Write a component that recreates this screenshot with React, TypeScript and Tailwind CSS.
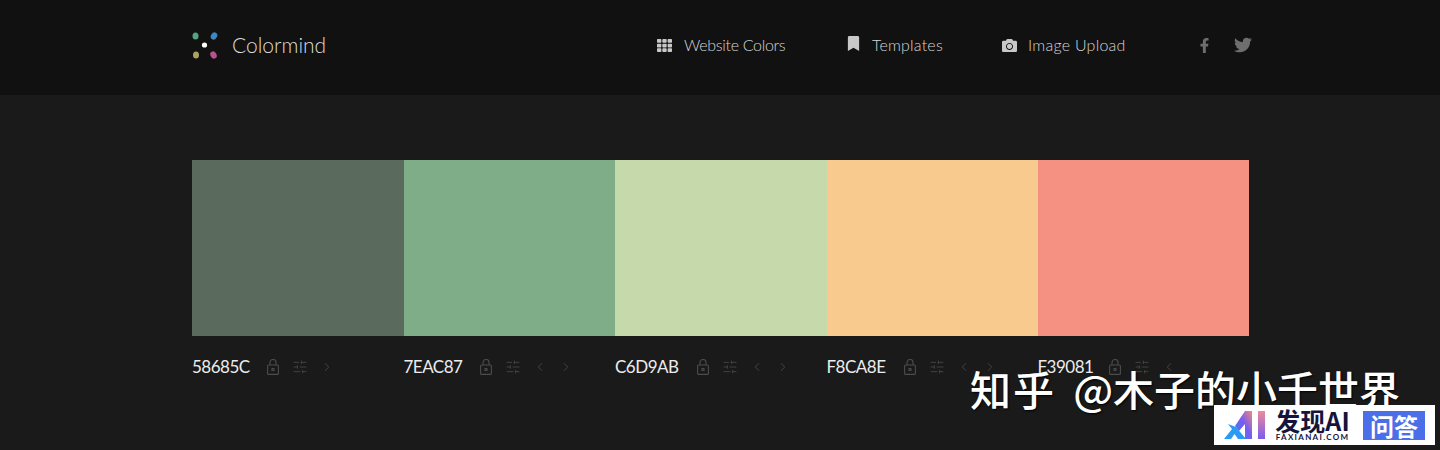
import React from "react";
import { FaTh, FaBookmark, FaCamera, FaFacebookF, FaTwitter } from "react-icons/fa";
import { SlidersHorizontal, ChevronLeft, ChevronRight } from "lucide-react";

const swatches = [
  { hex: "58685C", bg: "bg-[#5a6a5d]", w: "w-[59px]", left: false, right: true },
  { hex: "7EAC87", bg: "bg-[#7fad88]", w: "w-[60px]", left: true, right: true },
  { hex: "C6D9AB", bg: "bg-[#c6d9ab]", w: "w-[66px]", left: true, right: true },
  { hex: "F8CA8E", bg: "bg-[#f8ca8e]", w: "w-[61px]", left: true, right: true },
  { hex: "F39081", bg: "bg-[#f59182]", w: "w-[55px]", left: true, right: false },
];

function Logo() {
  return (
    <svg width="26" height="30" viewBox="0 0 26 30" className="shrink-0">
      <ellipse cx="3.5" cy="6" rx="3" ry="3.6" fill="#52a583" />
      <ellipse cx="22" cy="6" rx="3" ry="3.8" transform="rotate(30 22 6)" fill="#3f86c4" />
      <circle cx="12.5" cy="15" r="2.6" fill="#ffffff" />
      <ellipse cx="4" cy="25" rx="3" ry="3.6" fill="#a9a35f" />
      <ellipse cx="21.5" cy="25" rx="3" ry="3.8" transform="rotate(-30 21.5 25)" fill="#b8528a" />
    </svg>
  );
}

function LockIcon() {
  return (
    <svg width="12" height="16" viewBox="0 0 12 16" fill="none" stroke="currentColor" strokeWidth="1.1" className="ml-[16px] shrink-0">
      <rect x="0.6" y="6" width="10.8" height="9.4" rx="1" />
      <path d="M3 6 V3.5 A3 3 0 0 1 9 3.5 V6" />
      <rect x="5" y="9.5" width="2" height="2" />
    </svg>
  );
}

function Tools({ s }: { s: (typeof swatches)[number] }) {
  return (
    <div className="flex items-center text-[#4c4c4c]">
      <LockIcon />
      <SlidersHorizontal size={16} strokeWidth={1.2} className="ml-[13px]" />
      {s.left && <ChevronLeft size={14} strokeWidth={1.4} className="ml-[12px]" />}
      {s.right && <ChevronRight size={14} strokeWidth={1.4} className="ml-[12px]" />}
    </div>
  );
}

export default function App() {
  return (
    <div className="relative h-[450px] w-[1440px] overflow-hidden bg-[#1a1a1a] font-['Lato',sans-serif]">
      <header className="flex h-[95px] items-center bg-[#111111] pb-[5px] pl-[192px] pr-[188px]">
        <Logo />
        <span className="ml-[14px] text-[21px] font-light text-[#dcdcdc]">Colormind</span>
        <nav className="ml-auto flex items-center text-[16px] font-light text-[#d6d6d6]">
          <FaTh size={15} className="text-[#c8c8c8]" />
          <span className="ml-[12px] w-[102px] whitespace-nowrap tracking-[-0.3px]">Website Colors</span>
          <FaBookmark size={15} className="ml-[60px] -mt-1 text-[#c8c8c8]" />
          <span className="ml-[11px] w-[71px] whitespace-nowrap tracking-[0.2px]">Templates</span>
          <FaCamera size={15} className="ml-[59px] text-[#c8c8c8]" />
          <span className="ml-[11px] w-[97px] whitespace-nowrap tracking-[0.25px]">Image Upload</span>
          <FaFacebookF size={15} className="ml-[72px] text-[#6e6e6e]" />
          <FaTwitter size={18} className="ml-[22px] text-[#6e6e6e]" />
        </nav>
      </header>

      <main className="mx-[192px] mt-[65px] w-[1057px]">
        <div className="grid h-[176px] grid-cols-[211.5px_211.5px_211.5px_211px_211.5px]">
          {swatches.map((s) => (
            <div key={s.hex} className={s.bg} />
          ))}
        </div>
        <div className="mt-[20px] grid grid-cols-[211.5px_211.5px_211.5px_211px_211.5px]">
          {swatches.map((s) => (
            <div key={s.hex} className="flex h-[22px] items-center">
              <span className={`${s.w} whitespace-nowrap text-[17px] tracking-[-0.5px] text-[#ececec]`}>{s.hex}</span>
              <Tools s={s} />
            </div>
          ))}
        </div>
      </main>

      <div className="absolute left-[970px] top-[362px] whitespace-nowrap font-['Noto_Sans_CJK_SC',sans-serif] text-[41px] font-medium leading-[52px] text-white [text-shadow:1px_1px_2px_#000]">
        <span className="tracking-[2px]">知乎</span>
        <span className="ml-[8px]"> @木子的小千世界</span>
      </div>

      <div className="absolute left-[1214px] top-[405px] flex h-[40px] w-[221px] items-center bg-white pl-[10px]">
        <svg width="42" height="30" viewBox="0 0 42 30" className="shrink-0">
          <defs>
            <linearGradient id="g1" x1="0" y1="1" x2="1" y2="0">
              <stop offset="0" stopColor="#3a7cf5" />
              <stop offset="0.55" stopColor="#7a5cf0" />
              <stop offset="1" stopColor="#f08a7a" />
            </linearGradient>
            <linearGradient id="g2" x1="0" y1="0" x2="0" y2="1">
              <stop offset="0" stopColor="#f08a9a" />
              <stop offset="1" stopColor="#7a5cf0" />
            </linearGradient>
          </defs>
          <path d="M11 16 L21 1 L28 1 L28 29 L21 29 L21 14 L15 21 Z" fill="url(#g1)" />
          <path d="M0 29 L8 19 L4 14 L12 17 L22 29 L14 29 L10.5 24 L7 29 Z" fill="#2a9bf5" />
          <rect x="34" y="1" width="7" height="28" fill="url(#g2)" />
        </svg>
        <div className="ml-[9px] flex w-[75px] flex-col items-center pb-[2px]">
          <span className="whitespace-nowrap font-['Noto_Sans_CJK_SC',sans-serif] text-[25px] font-bold leading-[25px] text-[#14143c]">发现AI</span>
          <span className="whitespace-nowrap text-[8px] font-bold leading-[8px] tracking-[1.3px] text-[#14143c]">FAXIANAI.COM</span>
        </div>
        <div className="ml-[13px] flex h-[29px] w-[62px] items-center justify-center bg-[#4a6fe8] font-['Noto_Sans_CJK_SC',sans-serif] text-[24px] font-bold leading-[29px] text-white">
          问答
        </div>
      </div>
    </div>
  );
}
